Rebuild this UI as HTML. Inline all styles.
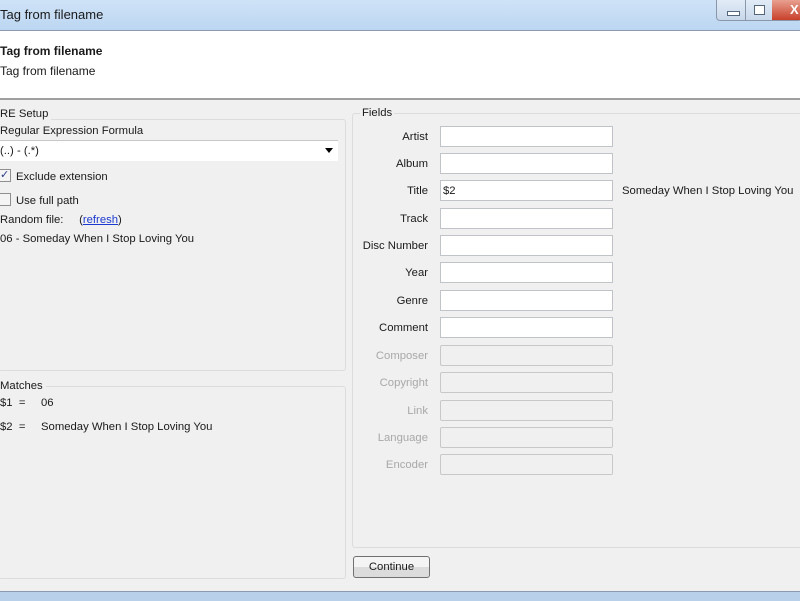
<!DOCTYPE html>
<html><head><style>
body{margin:0;width:800px;height:600px;overflow:hidden;background:#f0f0f0;font-family:"Liberation Sans",sans-serif;font-size:11.3px;line-height:16px;color:#1a1a1a;position:relative}
.a{position:absolute;white-space:nowrap}
.tb{left:0;top:0;width:800px;height:30px;background:linear-gradient(#cfe3f7,#bcd6f1);border-bottom:1px solid #8a9bb0}
.hd{left:0;top:31px;width:800px;height:67px;background:#fff;border-bottom:2px solid #a0a0a0}
.grp{position:absolute;border:1px solid #dcdcdc;border-radius:3px}
.in{position:absolute;left:440px;width:171px;height:19px;background:#fff;border:1px solid #c0c4c8}
.in.d{background:#f0f0f0;border-color:#c8c8c8;border-radius:2px}
.lb{position:absolute;right:372px;text-align:right}
.lb.d{color:#a8a8a8}
</style></head><body>
<div class="a tb"></div>
<div class="a" style="left:0;top:7px;font-size:13px">Tag from filename</div>
<div class="a" style="left:716px;top:0;width:84px;height:20px;border:1px solid #8a97a8;border-top:none;border-radius:0 0 4px 4px;background:linear-gradient(#e2ecf7,#c8d8ea)"></div>
<div class="a" style="left:745px;top:0;width:1px;height:20px;background:#8a97a8"></div>
<div class="a" style="left:772px;top:0;width:28px;height:20px;background:linear-gradient(#e8a090,#c8402a)"></div>
<div class="a" style="left:727px;top:11px;width:11px;height:3px;border:1px solid #55657a;background:#fff"></div>
<div class="a" style="left:754px;top:5px;width:9px;height:8px;border:1px solid #55657a;background:#fff"></div>
<div class="a" style="left:790px;top:2px;color:#fff;font-weight:bold;font-size:13px">X</div>
<div class="a hd"></div>
<div class="a" style="left:0;top:43px;font-weight:bold;font-size:12px">Tag from filename</div>
<div class="a" style="left:0;top:63px;font-size:12px">Tag from filename</div>

<div class="grp" style="left:-2px;top:119px;width:346px;height:250px"></div>
<div class="a" style="left:0;top:106px;background:#f0f0f0;padding-right:3px">RE Setup</div>
<div class="a" style="left:0;top:123px">Regular Expression Formula</div>
<div class="a" style="left:0;top:140px;width:338px;height:20px;background:#fff;border-top:1px solid #c8c8c8"></div>
<div class="a" style="left:0;top:143px">(..) - (.*)</div>
<div class="a" style="left:325px;top:148px;border-left:4px solid transparent;border-right:4px solid transparent;border-top:5px solid #000"></div>
<div class="a" style="left:-1px;top:169px;width:10px;height:11px;border:1px solid #8f8f8f;background:#f4f4f4;font-size:11px;line-height:11px;color:#2a3a8a">✓</div>
<div class="a" style="left:16px;top:169px">Exclude extension</div>
<div class="a" style="left:-1px;top:193px;width:10px;height:11px;border:1px solid #8f8f8f;background:#f4f4f4"></div>
<div class="a" style="left:16px;top:193px">Use full path</div>
<div class="a" style="left:0;top:212px">Random file:&nbsp;&nbsp;&nbsp;&nbsp;&nbsp;(<span style="color:#1a3ad0;text-decoration:underline">refresh</span>)</div>
<div class="a" style="left:0;top:231px">06 - Someday When I Stop Loving You</div>

<div class="grp" style="left:-2px;top:386px;width:346px;height:191px"></div>
<div class="a" style="left:0;top:378px;background:#f0f0f0;padding-right:3px">Matches</div>
<div class="a" style="left:0;top:395px">$1&nbsp; =</div><div class="a" style="left:41px;top:395px">06</div>
<div class="a" style="left:0;top:419px">$2&nbsp; =</div><div class="a" style="left:41px;top:419px">Someday When I Stop Loving You</div>

<div class="grp" style="left:352px;top:113px;width:460px;height:433px"></div>
<div class="a" style="left:360px;top:105px;background:#f0f0f0;padding:0 2px">Fields</div>

<div class="lb" style="top:129px">Artist</div><div class="in" style="top:126px"></div>
<div class="lb" style="top:156px">Album</div><div class="in" style="top:153px"></div>
<div class="lb" style="top:183px">Title</div><div class="in" style="top:180px"></div>
<div class="a" style="left:443px;top:183px">$2</div>
<div class="a" style="left:622px;top:183px">Someday When I Stop Loving You</div>
<div class="lb" style="top:211px">Track</div><div class="in" style="top:208px"></div>
<div class="lb" style="top:238px">Disc Number</div><div class="in" style="top:235px"></div>
<div class="lb" style="top:265px">Year</div><div class="in" style="top:262px"></div>
<div class="lb" style="top:293px">Genre</div><div class="in" style="top:290px"></div>
<div class="lb" style="top:320px">Comment</div><div class="in" style="top:317px"></div>
<div class="lb d" style="top:348px">Composer</div><div class="in d" style="top:345px"></div>
<div class="lb d" style="top:375px">Copyright</div><div class="in d" style="top:372px"></div>
<div class="lb d" style="top:403px">Link</div><div class="in d" style="top:400px"></div>
<div class="lb d" style="top:430px">Language</div><div class="in d" style="top:427px"></div>
<div class="lb d" style="top:457px">Encoder</div><div class="in d" style="top:454px"></div>

<div class="a" style="left:353px;top:556px;width:75px;height:20px;border:1px solid #707070;border-radius:3px;background:linear-gradient(#f4f4f4 50%,#dcdcdc 50%);text-align:center;line-height:21px">Continue</div>
<div class="a" style="left:0;top:591px;width:800px;height:9px;background:#b8d0ea;border-top:1px solid #8a9bb0"></div>
</body></html>
